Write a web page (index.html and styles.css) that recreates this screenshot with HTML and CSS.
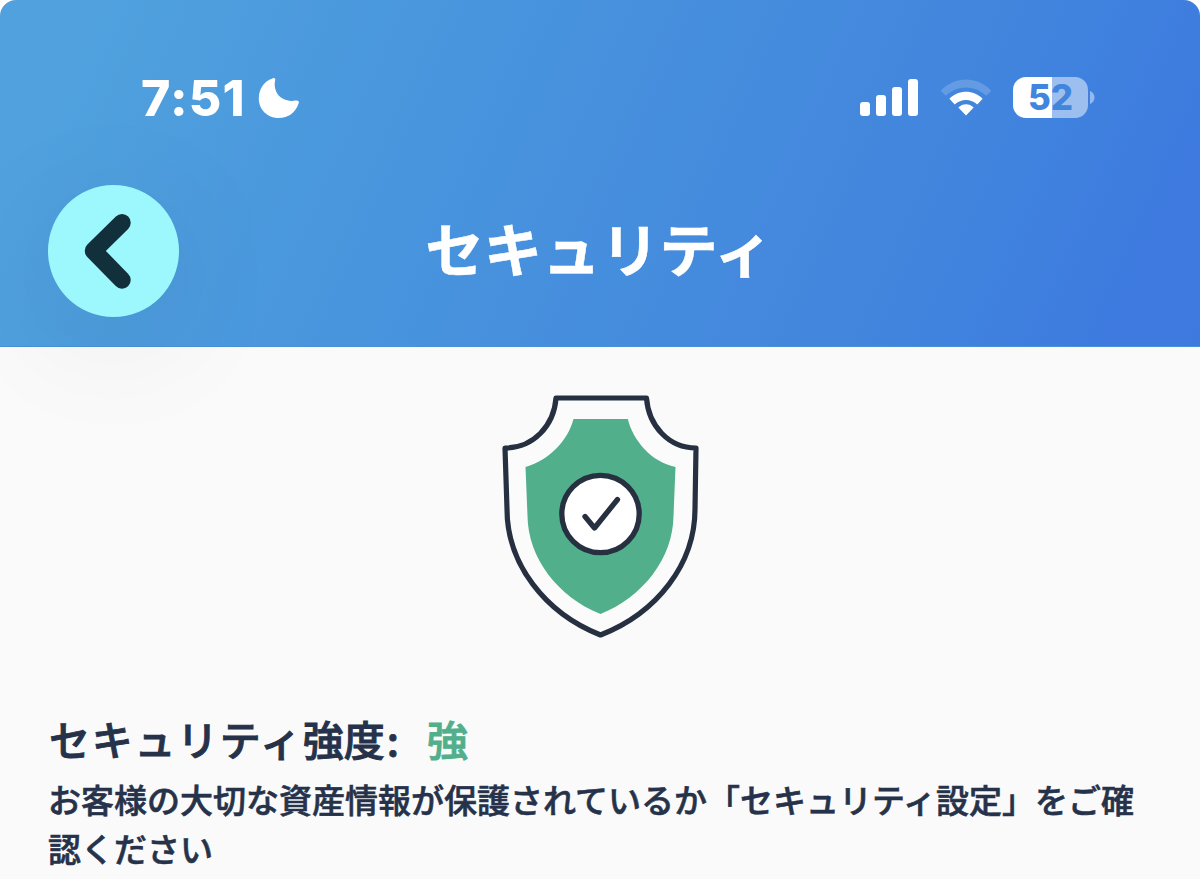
FILE: index.html
```
<!DOCTYPE html>
<html lang="ja">
<head>
  <meta charset="UTF-8" />
  <meta name="viewport" content="width=device-width, initial-scale=1.0" />
  <title>セキュリティ</title>
  <link rel="stylesheet" href="styles.css">
</head>
<body>
  <div class="screen">
    <header class="header">
      <!-- Status bar -->
      <div class="status-bar">
        <div class="clock">
          <span class="time">7:51</span>
          <svg class="moon" width="42" height="42" viewBox="0 0 42 42"><path d="M14.5 1.400C16 .5 17.700 1.500 17.200 3.300C14.500 14 22.500 26 37.500 23.600C40 23.200 41.600 24.300 40.600 26.500C37.500 35.500 30.500 41 20.500 41C9.500 41 .8 32.500 .8 21.500C.8 12 5.500 4.500 14.500 1.400Z" fill="#fff"/></svg>
        </div>
        <div class="indicators">
          <svg width="58" height="38" viewBox="0 0 58 38" fill="#fff">
            <rect x="0" y="23" width="10" height="14" rx="3"/>
            <rect x="16" y="16" width="10" height="21" rx="3"/>
            <rect x="32" y="8" width="10" height="29" rx="3"/>
            <rect x="48" y="0" width="10" height="37" rx="3"/>
          </svg>
          <svg class="wifi" width="52" height="38" viewBox="0 0 52 38">
            <path d="M.7 11.700C15-3.300 37-3.300 51.300 11.700L46.300 16.700C34.500 5.600 17.500 5.600 5.700 16.700Z" fill="#fff" opacity=".18"/>
            <path d="M9.400 19.700C18.500 10.400 33.500 10.400 42.600 19.700L37.300 25.600C31 19.500 21 19.500 14.700 25.600Z" fill="#fff"/>
            <path d="M18.300 28.600C22.500 24 29.500 24 33.700 28.600L26 36.500Z" fill="#fff"/>
          </svg>
          <div class="battery"><span class="battery-level">52</span></div>
          <svg class="battery-cap" width="5" height="13" viewBox="0 0 5 13"><path d="M0 0C2.500 1 4.500 3.500 4.500 6.500S2.500 12 0 13Z" fill="#fff" opacity=".45"/></svg>
        </div>
      </div>

      <!-- Title bar -->
      <div class="nav">
        <button class="back" aria-label="戻る">
          <svg width="131" height="132" viewBox="0 0 131 132"><path d="M74 37.700L45.500 65.800L74 95" fill="none" stroke="#12303b" stroke-width="17.500" stroke-linecap="round" stroke-linejoin="round"/></svg>
        </button>
        <h1 class="title">セキュリティ</h1>
      </div>
    </header>

    <main class="content">
      <svg class="shield" width="200" height="250" viewBox="0 0 200 250">
        <path d="M56 8H146.500C148.500 36 169 58 196 58L195 119C195 174 157 223 100.500 245C45 223 7 174 7 119L5 58C33 58 54 36 56 8Z" fill="#fbfbfb" stroke="#263040" stroke-width="5.200" stroke-linejoin="round"/>
        <path d="M73.500 29H127.800C133 50 151 72 175.500 77L173.500 126C173 168 143 207 100.500 224C58 207 28 168 27.500 126L25.500 77C50 70 68 50 73.500 29Z" fill="#51af8b"/>
        <circle cx="100.500" cy="124" r="38.700" fill="#fff" stroke="#263040" stroke-width="5.300"/>
        <path d="M85 126.500L94.500 138L117.500 109.500" fill="none" stroke="#263040" stroke-width="5.300" stroke-linecap="round" stroke-linejoin="round"/>
      </svg>
      <h2 class="strength"><span class="kana">セキュリティ</span>強度<span class="colon">:</span><span class="strength-value">強</span></h2>
      <p class="description">お客様の大切な資産情報が保護されているか「セキュリティ設定」をご確認ください</p>
    </main>
  </div>
</body>
</html>
```
FILE: styles.css
```
* { box-sizing: border-box; }
body { margin: 0; background: #fff; font-family: "Noto Sans CJK JP", sans-serif; }
.screen { height: 879px; background: #fafafa; border-radius: 16px 16px 0 0; overflow: hidden; }

.header { height: 347px; border-bottom: 1px solid #4a91d8; background: linear-gradient(114deg, #50a1de 8%, #4894dd 38%, #4489dd 65%, #4083de 80%, #3e7bdf 92%, #3e79df 100%); }
.status-bar { display: flex; justify-content: space-between; align-items: center; height: 185px; padding: 10px 105px 0 141px; }
.clock { display: flex; align-items: center; gap: 12px; color: #fff; }
.time { width: 105px; font: 800 50px/60px Inter, sans-serif; letter-spacing: 1.200px; white-space: nowrap; }
.indicators { display: flex; align-items: center; }
.wifi { margin-left: 22px; }
.battery { width: 75px; height: 41px; margin-left: 21px; border-radius: 13px; background: linear-gradient(90deg, #fff 52%, #9dbff0 52%); text-align: center; }
.battery-level { display: block; font: 800 35px/41px Inter, sans-serif; color: #4185dd; }
.battery-cap { margin-left: 2px; }

.nav { display: grid; grid-template-columns: 131px 1fr 133px; align-items: center; padding: 0 48px; }
.back { width: 131px; height: 132px; padding: 0; border: 0; border-radius: 50%; background: #9cf8fd; box-shadow: 0 24px 130px rgba(0, 0, 0, 0.08); }
.back svg { display: block; }
.title { margin: -8px 0 0; color: #fff; font-size: 58.500px; line-height: 80px; font-weight: 700; text-align: center; -webkit-text-stroke: 0.500px #fff; }

.content { display: flex; flex-direction: column; padding: 43px 48px 0; color: #26324a; }
.shield { align-self: center; }
.strength { margin: 70px 0 0; padding-left: 1px; font-size: 41px; line-height: 56px; font-weight: 500; -webkit-text-stroke: 0.900px currentColor; }
.kana { letter-spacing: 1.700px; }
.colon { margin-left: 2px; }
.strength-value { margin-left: 28px; color: #51af8b; }
.description { width: 1100px; margin: 9px 0 0; font-size: 33px; line-height: 48.500px; font-weight: 500; -webkit-text-stroke: 0.600px currentColor; }
```
